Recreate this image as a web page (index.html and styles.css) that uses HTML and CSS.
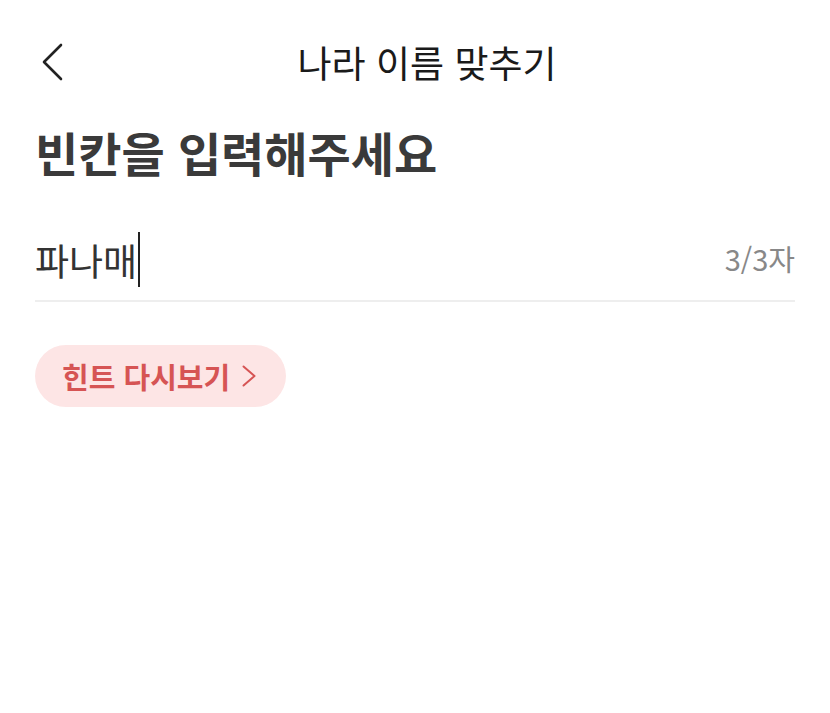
FILE: index.html
```html
<!DOCTYPE html>
<html lang="ko">
<head>
    <meta charset="UTF-8">
    <title>나라 이름 맞추기</title>
    <link rel="stylesheet" href="styles.css">
</head>
<body>
    <div class="topbar">
        <button class="back">
            <svg width="24" height="40" viewBox="0 0 24 40">
                <path d="M21 3 L4 20 L21 37" fill="none" stroke="#222" stroke-width="2.6" stroke-linecap="round" stroke-linejoin="round"/>
            </svg>
        </button>
        <h1 class="title">나라 이름 맞추기</h1>
    </div>

    <div class="content">
        <h2 class="question">빈칸을 입력해주세요</h2>

        <div class="answer">
            <span class="typed">파나매<span class="cursor"></span></span>
            <span class="count">3/3자</span>
        </div>

        <button class="hint">힌트 다시보기
            <svg width="14" height="22" viewBox="0 0 14 22">
                <path d="M1.5 1.5 L12.5 11 L1.5 20.5" fill="none" stroke="#d65454" stroke-width="2" stroke-linecap="round" stroke-linejoin="round"/>
            </svg>
        </button>
    </div>
</body>
</html>
```

FILE: styles.css
```css
/* 기본 */
body{
    margin: 0;
    background: #fff;
    font-family: "Noto Sans CJK KR", "Noto Sans", sans-serif;
    color: #222;
}

button{
    border: 0;
    background: none;
    padding: 0;
    font: inherit;
    cursor: pointer;
}

/* 상단바 */
.topbar{
    position: relative;
    height: 124px;
    display: flex;
    align-items: center;
    justify-content: center;
}

.back{
    position: absolute;
    left: 40px;
    top: 42px;
    display: flex;
}

.title{
    margin: 0 0 0 24px;
    font-size: 37px;
    font-weight: 400;
    color: #1a1a1a;
}

/* 본문 */
.content{
    padding: 0 35px;
}

.question{
    margin: 0;
    font-size: 47px;
    font-weight: 700;
    color: #3a3a3a;
    line-height: 56px;
}

.answer{
    margin-top: 52px;
    height: 68px;
    border-bottom: 2px solid #eeeeee;
    display: flex;
    justify-content: space-between;
    align-items: flex-start;
}

.typed{
    font-size: 37px;
    color: #333;
    line-height: 52px;
    display: flex;
    align-items: center;
}

.cursor{
    display: inline-block;
    width: 2px;
    height: 55px;
    background: #222;
    margin-left: 1px;
}

.count{
    font-size: 29px;
    color: #888;
    line-height: 52px;
}

.hint{
    margin-top: 43px;
    height: 62px;
    padding: 0 30px 0 27px;
    border-radius: 31px;
    background: #fde5e5;
    color: #d65454;
    font-size: 29px;
    font-weight: 700;
    display: flex;
    align-items: center;
    gap: 12px;
}
```
